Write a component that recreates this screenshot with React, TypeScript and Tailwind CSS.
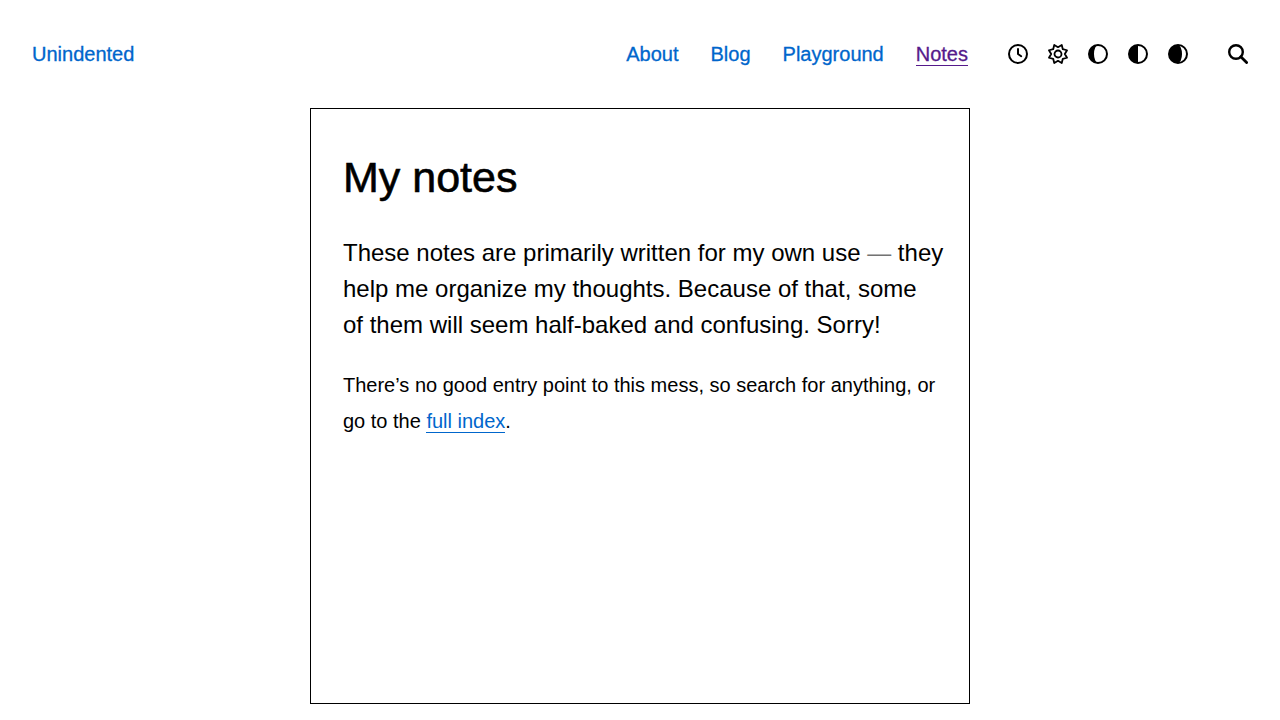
import type { ReactNode } from "react";

const navLinks = [
  { label: "About", current: false },
  { label: "Blog", current: false },
  { label: "Playground", current: false },
  { label: "Notes", current: true },
];

function Icon({ children }: { children: ReactNode }) {
  return (
    <svg
      viewBox="0 0 20 20"
      className="block size-5 overflow-visible"
      fill="none"
      stroke="currentColor"
      strokeWidth="2"
      strokeLinecap="round"
      strokeLinejoin="round"
      aria-hidden="true"
    >
      {children}
    </svg>
  );
}

function Moon({ shade }: { shade: string }) {
  return (
    <Icon>
      <circle cx="10" cy="10" r="9" />
      <path d={shade} fill="currentColor" stroke="none" />
    </Icon>
  );
}

const gear = Array.from({ length: 16 }, (_, i) => {
  const angle = ((i + 1) * Math.PI) / 8;
  const radius = i % 2 === 0 ? 9.8 : 6.8;
  return `${(10 + radius * Math.cos(angle)).toFixed(2)},${(10 + radius * Math.sin(angle)).toFixed(2)}`;
}).join(" ");

const themes = [
  {
    label: "Automatic theme",
    icon: (
      <Icon>
        <circle cx="10" cy="10" r="9" />
        <path d="M10 5v5l3.2 2.2" />
      </Icon>
    ),
  },
  {
    label: "Light theme",
    icon: (
      <Icon>
        <polygon points={gear} strokeWidth="1.8" />
        <circle cx="10" cy="10" r="3.5" strokeWidth="1.8" />
      </Icon>
    ),
  },
  { label: "Dim theme", icon: <Moon shade="M10 1a9 9 0 0 0 0 18a4 9 0 0 1 0-18z" /> },
  { label: "Dark theme", icon: <Moon shade="M10 1a9 9 0 0 0 0 18z" /> },
  { label: "Black theme", icon: <Moon shade="M10 1a9 9 0 0 0 0 18a4 9 0 0 0 0-18z" /> },
];

export default function App() {
  return (
    <div className="flex min-h-screen flex-col bg-white font-['Liberation_Sans',Arial,sans-serif] text-black">
      <header className="flex min-h-27 flex-wrap items-center justify-between gap-x-10 px-8 text-xl leading-[22px] text-[#0066cc]">
        <a href="#home" className="border-b border-transparent [-webkit-text-stroke:0.3px_currentColor]">
          Unindented
        </a>
        <div className="flex flex-wrap items-center gap-10">
          <nav className="flex gap-8 [-webkit-text-stroke:0.3px_currentColor]">
            {navLinks.map(({ label, current }) => (
              <a
                key={label}
                href={`#${label.toLowerCase()}`}
                aria-current={current ? "page" : undefined}
                className={current ? "border-b border-current text-[#551a8b]" : "border-b border-transparent"}
              >
                {label}
              </a>
            ))}
          </nav>
          <div className="flex gap-5 text-black">
            {themes.map(({ label, icon }) => (
              <button key={label} type="button" aria-label={label}>
                {icon}
              </button>
            ))}
          </div>
          <button type="button" aria-label="Search" className="text-black">
            <svg viewBox="0 0 20 20" className="block size-5" fill="none" stroke="currentColor" strokeWidth="2.4" aria-hidden="true">
              <circle cx="8" cy="8" r="6.8" />
              <path d="M12.8 12.8l5.8 5.8" strokeWidth="2.8" strokeLinecap="round" />
            </svg>
          </button>
        </div>
      </header>
      <main className="flex flex-1 flex-col items-center pb-4">
        <article className="w-full max-w-165 flex-1 border border-black p-8">
          <h1 className="mb-[22px] text-[43px] leading-18 [-webkit-text-stroke:0.6px_currentColor]">My notes</h1>
          <p className="-mr-3 mb-6 text-2xl leading-9">
            These notes are primarily written for my own use <span className="text-neutral-500">—</span> they help me
            organize my thoughts. Because of that, some of{"\u00a0"}them will seem half-baked and confusing. Sorry!
          </p>
          <p className="text-xl leading-9">
            There’s no good entry point to this mess, so search for anything, or go to the{" "}
            <a href="#index" className="border-b border-current text-[#0066cc]">
              full index
            </a>
            .
          </p>
        </article>
      </main>
    </div>
  );
}
